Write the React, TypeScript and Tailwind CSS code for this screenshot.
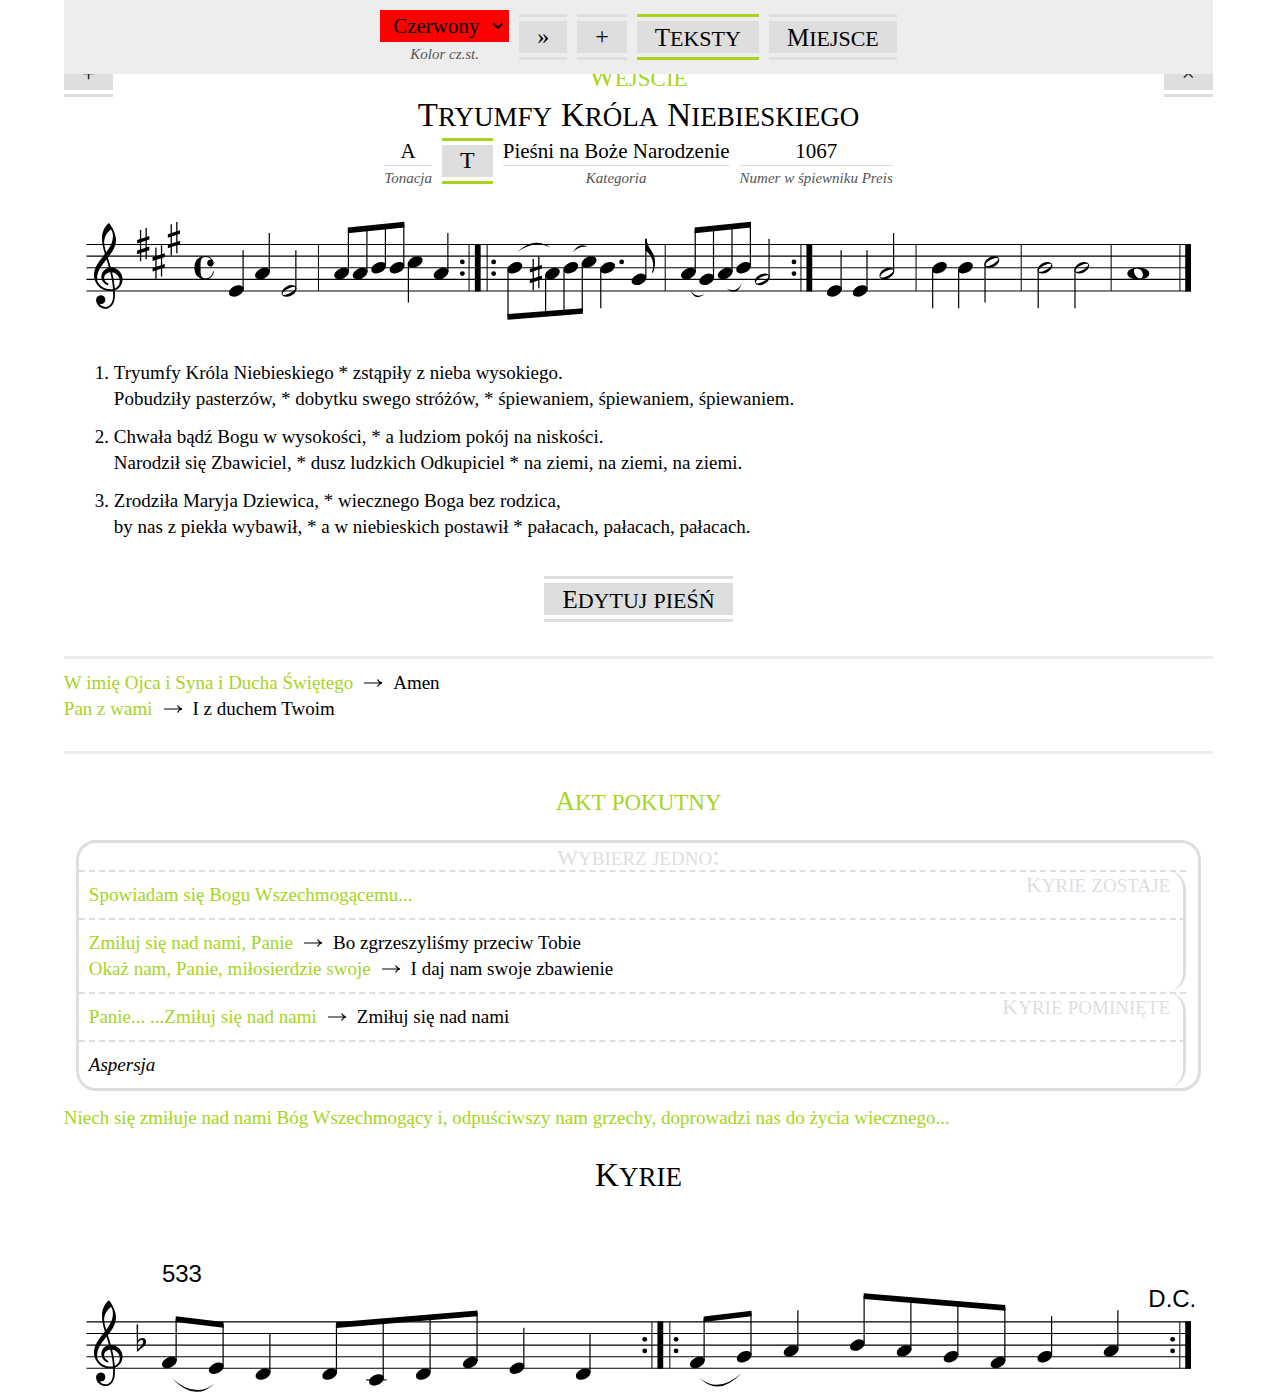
import React from "react";

type NoteKind = "quarter" | "half" | "whole";
type Note = { x: number; step: number; kind?: NoteKind; stem?: "up" | "down"; tip?: number };
type Beam = { x1: number; y1: number; x2: number; y2: number };
type Slur = { from: [number, number]; mid: [number, number]; to: [number, number] };

const GAP = 11.6;
const HEIGHT = GAP * 4;
const stepY = (step: number) => HEIGHT - (step * GAP) / 2;

const CLEF =
  "M9.69 -37.41c.09 -.09 .24 -.06 .36 0c.12 .09 .57 .6 .96 1.11c1.77 2.34 3.21 5.85 3.57 8.73c.21 1.56 .03 3.27 -.45 4.86c-.69 2.31 -1.92 4.47 -4.23 7.44c-.3 .39 -.57 .72 -.6 .75c-.03 .06 0 .15 .18 .78c.54 1.68 1.38 4.44 1.68 5.49l.09 .42l.39 0c1.47 .09 2.76 .51 3.96 1.29c1.83 1.23 3.06 3.21 3.39 5.52c.09 .45 .12 1.29 .06 1.74c-.09 1.02 -.33 1.83 -.75 2.73c-.84 1.71 -2.28 3.06 -4.02 3.72l-.33 .12l.03 1.26c0 1.74 -.06 3.63 -.21 4.62c-.45 3.06 -2.19 5.49 -4.47 6.21c-.57 .18 -.9 .21 -1.59 .21c-.69 0 -1.02 -.03 -1.65 -.21c-1.14 -.27 -2.13 -.84 -2.94 -1.65c-.99 -.99 -1.56 -2.16 -1.71 -3.54c-.09 -.81 .06 -1.53 .45 -2.13c.63 -.99 1.83 -1.56 3 -1.53c1.5 .09 2.64 1.32 2.73 2.94c.06 1.47 -.93 2.7 -2.37 2.97c-.45 .06 -.84 .03 -1.29 -.09l-.21 -.09l.09 .12c.39 .54 .78 .93 1.32 1.26c1.35 .87 3.06 1.02 4.35 .36c1.44 -.72 2.52 -2.28 2.97 -4.35c.15 -.66 .24 -1.5 .3 -3.03c.03 -.84 .03 -2.94 0 -3c-.03 0 -.18 0 -.36 .03c-.66 .12 -.99 .12 -1.83 .12c-1.05 0 -1.71 -.06 -2.61 -.3c-4.02 -.99 -7.11 -4.35 -7.8 -8.46c-.12 -.66 -.12 -.99 -.12 -1.83c0 -.84 0 -1.14 .15 -1.92c.36 -2.28 1.41 -4.62 3.3 -7.29l2.79 -3.6c.54 -.66 .96 -1.2 .96 -1.23c0 -.03 -.09 -.33 -.18 -.69c-.96 -3.21 -1.41 -5.28 -1.59 -7.68c-.12 -1.38 -.15 -3.09 -.06 -3.96c.33 -2.67 1.38 -5.07 3.12 -7.08c.36 -.42 .99 -1.05 1.17 -1.14zm2.01 4.71c-.15 -.3 -.3 -.54 -.3 -.54c-.03 0 -.18 .09 -.3 .21c-2.4 1.74 -3.87 4.2 -4.26 7.11c-.06 .54 -.06 1.41 -.03 1.89c.09 1.29 .48 3.12 1.08 5.22c.15 .42 .24 .78 .24 .81c0 .03 .84 -1.11 1.23 -1.68c1.89 -2.73 2.88 -5.07 3.15 -7.53c.09 -.57 .12 -1.74 .06 -2.37c-.09 -1.23 -.27 -1.92 -.87 -3.12zm-2.94 20.7c-.21 -.72 -.39 -1.32 -.42 -1.32c0 0 -1.2 1.47 -1.86 2.37c-2.79 3.63 -4.02 6.3 -4.35 9.3c-.03 .21 -.03 .69 -.03 1.08c0 .69 0 .75 .06 1.11c.12 .54 .27 .99 .51 1.47c.69 1.38 1.83 2.55 3.42 3.42c.96 .54 2.07 .9 3.21 1.08c.78 .12 2.04 .12 2.94 -.03c.51 -.06 .45 -.03 .42 -.3c-.24 -3.33 -.72 -6.33 -1.62 -10.08c-.09 -.39 -.18 -.75 -.18 -.78c-.03 -.03 -.42 0 -.81 .09c-.9 .18 -1.65 .57 -2.22 1.14c-.72 .72 -1.08 1.65 -1.05 2.64c.06 .96 .48 1.83 1.23 2.58c.36 .36 .72 .63 1.17 .9c.33 .18 .36 .21 .42 .33c.18 .42 -.18 .9 -.6 .87c-.18 -.03 -.84 -.36 -1.26 -.63c-.78 -.51 -1.38 -1.11 -1.86 -1.83c-1.77 -2.7 -.99 -6.42 1.71 -8.19c.3 -.21 .81 -.48 1.17 -.63c.3 -.09 1.02 -.3 1.14 -.3c.06 0 .09 0 .09 -.03c.03 -.03 -.51 -1.92 -1.23 -4.26zm3.78 7.41c-.18 -.03 -.36 -.06 -.39 -.06c-.03 0 0 .21 .18 1.02c.75 3.18 1.26 6.3 1.5 9.09c.06 .72 0 .69 .51 .42c.78 -.36 1.44 -.96 1.98 -1.77c1.08 -1.62 1.2 -3.69 .3 -5.55c-.81 -1.62 -2.31 -2.79 -4.08 -3.15z";
const COMMON_TIME =
  "M6.66 -7.83c.72 -.06 1.41 -.03 1.98 .09c1.2 .27 2.34 .96 3.09 1.92c.63 .81 1.08 1.86 1.14 2.73c.06 1.02 -.51 1.92 -1.44 2.22c-.24 .09 -.3 .09 -.63 .09c-.33 0 -.42 0 -.63 -.06c-.66 -.24 -1.14 -.63 -1.41 -1.2c-.15 -.3 -.21 -.51 -.24 -.9c-.06 -1.08 .57 -2.04 1.56 -2.37c.18 -.06 .27 -.06 .63 -.06l.45 0c.06 .03 .09 .03 .09 0c0 0 -.09 -.12 -.24 -.27c-1.02 -1.11 -2.55 -1.68 -4.08 -1.5c-1.29 .15 -2.04 .69 -2.4 1.74c-.36 .93 -.42 1.89 -.42 5.37c0 2.97 .06 3.96 .24 4.77c.24 1.08 .63 1.68 1.41 2.07c.81 .39 2.16 .45 3.18 .09c1.29 -.45 2.37 -1.53 3.03 -2.97c.15 -.33 .33 -.87 .39 -1.17c.09 -.24 .15 -.36 .3 -.39c.21 -.03 .42 .15 .39 .36c-.06 .39 -.42 1.38 -.69 1.89c-.96 1.8 -2.49 2.94 -4.23 3.18c-.99 .12 -2.58 -.06 -3.63 -.45c-.96 -.36 -1.71 -.84 -2.4 -1.5c-1.11 -1.11 -1.8 -2.61 -2.04 -4.56c-.06 -.6 -.06 -2.01 0 -2.61c.24 -1.95 .9 -3.45 2.01 -4.56c.69 -.66 1.44 -1.11 2.37 -1.47c.63 -.24 1.47 -.42 2.22 -.48z";

function Sharp({ x, step }: { x: number; step: number }) {
  return (
    <g transform={`translate(${x} ${stepY(step)})`}>
      <path d="M-2.7 -14.5V16.8M2.9 -16.7V14.6" stroke="#000" strokeWidth="1.3" />
      <path d="M-6.1 -1L6.1 -5V-8.6L-6.1 -4.6ZM-6.1 9.600L6.1 5.600V2L-6.1 6Z" />
    </g>
  );
}

function NoteShape({ x, step, kind = "quarter", stem, tip }: Note) {
  const y = stepY(step);
  const up = stem === "up";
  const stemX = up ? x + 6.8 : x - 6.8;
  return (
    <g>
      {kind === "quarter" && <ellipse rx="7.9" ry="5.1" transform={`translate(${x} ${y}) rotate(-26)`} />}
      {kind === "half" && (
        <path
          fillRule="evenodd"
          transform={`translate(${x} ${y}) rotate(-28)`}
          d="M-8 0A8 5.1 0 1 1 8 0A8 5.1 0 1 1 -8 0ZM-7.1 .5A7.1 2.4 0 1 0 7.1 -.5A7.1 2.4 0 1 0 -7.1 .5Z"
        />
      )}
      {kind === "whole" && (
        <path
          fillRule="evenodd"
          transform={`translate(${x} ${y})`}
          d="M-11 0C-11 -4 -6 -5.8 0 -5.8S11 -4 11 0S6 5.8 0 5.8S-11 4 -11 0ZM-4.4 -2.4C-4 1.8 -.5 5.4 2.5 4.8C5.4 4.2 5 -.2 3.2 -2.8C1.4 -5.4 -4.8 -6.4 -4.4 -2.4Z"
        />
      )}
      {stem && tip !== undefined && (
        <path d={`M${stemX} ${up ? y - 1.5 : y + 1.5}V${tip}`} stroke="#000" strokeWidth="1.2" />
      )}
    </g>
  );
}

function BeamShape({ x1, y1, x2, y2 }: Beam) {
  return <path d={`M${x1} ${y1}L${x2} ${y2}V${y2 + 5.7}L${x1} ${y1 + 5.7}Z`} />;
}

function SlurShape({ from, mid, to }: Slur) {
  const cx = 2 * mid[0] - (from[0] + to[0]) / 2;
  const cy = 2 * mid[1] - (from[1] + to[1]) / 2;
  const inner = cy + (cy > from[1] ? -3.6 : 3.6);
  return <path d={`M${from[0]} ${from[1]}Q${cx} ${cy} ${to[0]} ${to[1]}Q${cx} ${inner} ${from[0]} ${from[1]}Z`} />;
}

function RepeatDots({ x }: { x: number }) {
  return (
    <g>
      <circle cx={x} cy={GAP * 1.5} r="2.4" />
      <circle cx={x} cy={GAP * 2.5} r="2.4" />
    </g>
  );
}

type StaffProps = {
  label: string;
  top: number;
  height: number;
  thin: number[];
  thick: number[];
  dots: number[];
  notes: Note[];
  beams: Beam[];
  slurs: Slur[];
  children?: React.ReactNode;
};

function Staff({ label, top, height, thin, thick, dots, notes, beams, slurs, children }: StaffProps) {
  return (
    <svg role="img" aria-label={label} viewBox={`64 ${-top} 1150 ${height}`} className="block w-full">
      {[0, 1, 2, 3, 4].map((n) => (
        <path key={n} d={`M86.5 ${n * GAP}H1191.7`} stroke="#000" strokeWidth="1.1" />
      ))}
      <path d={CLEF} transform={`translate(94 ${GAP * 3}) scale(1.5)`} />
      {thin.map((x) => (
        <path key={x} d={`M${x} 0V${HEIGHT}`} stroke="#000" strokeWidth="1" />
      ))}
      {thick.map((x) => (
        <path key={x} d={`M${x} -.5V${HEIGHT + 0.5}`} stroke="#000" strokeWidth="5.8" />
      ))}
      {dots.map((x) => (
        <RepeatDots key={x} x={x} />
      ))}
      {notes.map((n) => (
        <NoteShape key={n.x} {...n} />
      ))}
      {beams.map((b) => (
        <BeamShape key={b.x1} {...b} />
      ))}
      {slurs.map((s) => (
        <SlurShape key={s.from[0]} {...s} />
      ))}
      {children}
    </svg>
  );
}

const songNotes: Note[] = [
  { x: 236.4, step: 0, stem: "up", tip: 5.8 },
  { x: 262.6, step: 3, stem: "up", tip: -11.6 },
  { x: 289.2, step: 0, kind: "half", stem: "up", tip: 5.8 },
  { x: 341.8, step: 3, stem: "up", tip: -14 },
  { x: 360.3, step: 3, stem: "up", tip: -16 },
  { x: 378.8, step: 4, stem: "up", tip: -18 },
  { x: 397.2, step: 4, stem: "up", tip: -20 },
  { x: 415.4, step: 5, stem: "down", tip: 58 },
  { x: 441.3, step: 3, stem: "up", tip: -11.6 },
  { x: 515.1, step: 4, stem: "down", tip: 72 },
  { x: 552.7, step: 3, stem: "down", tip: 70 },
  { x: 571.1, step: 4, stem: "down", tip: 68 },
  { x: 589.4, step: 5, stem: "down", tip: 67 },
  { x: 607.9, step: 4, stem: "down", tip: 63.8 },
  { x: 639.4, step: 2, stem: "up", tip: -5.8 },
  { x: 688.8, step: 3, stem: "up", tip: -14 },
  { x: 707.1, step: 2, stem: "up", tip: -16 },
  { x: 725.6, step: 3, stem: "up", tip: -18 },
  { x: 744, step: 4, stem: "up", tip: -20 },
  { x: 762.7, step: 2, kind: "half", stem: "up", tip: -5.8 },
  { x: 834.8, step: 0, stem: "up", tip: 5.8 },
  { x: 860.7, step: 0, stem: "up", tip: 5.8 },
  { x: 887.3, step: 3, kind: "half", stem: "up", tip: -11.6 },
  { x: 940, step: 4, stem: "down", tip: 63.8 },
  { x: 966, step: 4, stem: "down", tip: 63.8 },
  { x: 992.4, step: 5, kind: "half", stem: "down", tip: 58 },
  { x: 1045.6, step: 4, kind: "half", stem: "down", tip: 63.8 },
  { x: 1082.4, step: 4, kind: "half", stem: "down", tip: 63.8 },
  { x: 1139, step: 3, kind: "whole" },
];

const kyrieNotes: Note[] = [
  { x: 169.4, step: 1, stem: "up", tip: -3 },
  { x: 216.4, step: 0, stem: "up", tip: 2 },
  { x: 263.2, step: -1, stem: "up", tip: 11.6 },
  { x: 329.8, step: -1, stem: "up", tip: 2 },
  { x: 376.6, step: -2, stem: "up", tip: -2 },
  { x: 423.5, step: -1, stem: "up", tip: -6 },
  { x: 470.5, step: 1, stem: "up", tip: -9 },
  { x: 517.3, step: 0, stem: "up", tip: 5.8 },
  { x: 583.5, step: -1, stem: "up", tip: 11.6 },
  { x: 697.7, step: 1, stem: "up", tip: -3 },
  { x: 744.6, step: 2, stem: "up", tip: -9 },
  { x: 791.5, step: 3, stem: "up", tip: -11.6 },
  { x: 857.8, step: 4, stem: "up", tip: -26 },
  { x: 904.6, step: 3, stem: "up", tip: -22 },
  { x: 951.6, step: 2, stem: "up", tip: -18 },
  { x: 998.6, step: 1, stem: "up", tip: -15 },
  { x: 1045.4, step: 2, stem: "up", tip: -5.8 },
  { x: 1111.7, step: 3, stem: "up", tip: -11.6 },
];

/* Small capitals are drawn at 70% of the font size, so the leading capital gets a smaller size to balance them. */
const capSizes = {
  title: { word: "text-[38px]", capital: "first-letter:text-[33px]" },
  heading: { word: "text-[33px]", capital: "first-letter:text-[27px]" },
  button: { word: "text-[31px]", capital: "first-letter:text-[25px]" },
  note: { word: "text-[27px]", capital: "first-letter:text-[22px]" },
};

function SmallCaps({ text, size }: { text: string; size: keyof typeof capSizes }) {
  const { word, capital } = capSizes[size];
  return (
    <>
      {text.split(" ").map((part, i) => (
        <React.Fragment key={part}>
          {i > 0 && " "}
          <span
            className={
              "inline-block [font-variant:small-caps] " + word + (part[0] !== part[0].toLowerCase() ? " " + capital : "")
            }
          >
            {part}
          </span>
        </React.Fragment>
      ))}
    </>
  );
}

function Plate({ text, active = false, label }: { text: string; active?: boolean; label?: string }) {
  return (
    <button
      type="button"
      aria-label={label}
      className={
        "flex flex-col items-stretch gap-1 border-y-3 py-1 " + (active ? "border-[#a6d41f]" : "border-[#dedede]")
      }
    >
      <span className="block h-8 bg-[#dedede] px-[18px] text-2xl leading-[30px]">
        {text.length > 1 ? <SmallCaps text={text} size="button" /> : text}
      </span>
    </button>
  );
}

function Fact({ value, label }: { value: string; label: string }) {
  return (
    <div className="flex flex-col text-center">
      <dt className="order-last text-[15px] leading-6 text-[#555] italic">{label}</dt>
      <dd className="border-b border-[#dedede] text-[21px] leading-[27px]">{value}</dd>
    </div>
  );
}

function Call({ say, reply }: { say: string; reply?: string }) {
  return (
    <p>
      <span className="text-[#a6d41f]">{say}</span>
      {reply && (
        <>
          <svg viewBox="0 0 20 10" className="mx-[10px] mb-px inline-block h-[10px] w-5 align-baseline" aria-label="→">
            <path d="M1 5H18.5M14.5 1.5Q16 4.5 19 5Q16 5.500 14.5 8.500" fill="none" stroke="#000" strokeWidth="1.200" />
          </svg>
          {reply}
        </>
      )}
    </p>
  );
}

const verses = [
  ["Tryumfy Króla Niebieskiego * zstąpiły z nieba wysokiego.", "Pobudziły pasterzów, * dobytku swego stróżów, * śpiewaniem, śpiewaniem, śpiewaniem."],
  ["Chwała bądź Bogu w wysokości, * a ludziom pokój na niskości.", "Narodził się Zbawiciel, * dusz ludzkich Odkupiciel * na ziemi, na ziemi, na ziemi."],
  ["Zrodziła Maryja Dziewica, * wiecznego Boga bez rodzica,", "by nas z piekła wybawił, * a w niebieskich postawił * pałacach, pałacach, pałacach."],
];

function OptionGroup({ label, children }: { label: string; children: React.ReactNode }) {
  return (
    <div className="relative mr-3">
      {children}
      <div className="pointer-events-none absolute inset-y-0 right-0 w-5 rounded-r-[20px] border-r-3 border-[#dedede]" />
      <p className="absolute top-0 right-4 text-[21px] leading-[26px] text-[#dedede]">
        <SmallCaps text={label} size="note" />
      </p>
    </div>
  );
}

function Option({ children }: { children: React.ReactNode }) {
  return <div className="border-t-2 border-dashed border-[#dedede] p-[10px]">{children}</div>;
}

export default function App() {
  return (
    <div className="min-h-screen bg-white font-['Liberation_Serif',serif] text-[19px] leading-[26px] text-black">
      <header className="fixed inset-x-[5%] top-0 z-10 flex h-[74px] justify-center gap-[10px] bg-[#ededed] pt-[10px]">
        <div className="flex flex-col items-center">
          <div className="relative">
            <select
              id="color"
              defaultValue="red"
              className="h-8 w-[129px] appearance-none bg-[#ff0000] pl-[13px] text-[21px] leading-8"
            >
              <option value="red">Czerwony</option>
            </select>
            <svg viewBox="0 0 12 8" className="pointer-events-none absolute top-3 right-[5px] h-2 w-3">
              <path d="M1.500 1.500L6 6L10.500 1.500" fill="none" stroke="#000" strokeWidth="1.800" />
            </svg>
          </div>
          <label htmlFor="color" className="text-[15px] leading-6 text-[#555] italic">
            Kolor cz.st.
          </label>
        </div>
        <div className="flex items-start gap-[10px] pt-1">
          <Plate text="»" />
          <Plate text="+" />
          <Plate text="Teksty" active />
          <Plate text="Miejsce" />
        </div>
      </header>

      <main className="mx-auto w-[90%] pt-[51px]">
        <section>
          <div className="flex h-[46px] items-start justify-between">
            <Plate text="+" label="Dodaj" />
            <h2 className="pt-2 text-2xl leading-8 text-[#a6d41f]">
              <SmallCaps text="Wejście" size="heading" />
            </h2>
            <Plate text="×" label="Usuń" />
          </div>
          <h1 className="mb-[9px] h-8 text-center text-4xl leading-8">
            <SmallCaps text="Tryumfy Króla Niebieskiego" size="title" />
          </h1>
          <dl className="flex items-start justify-center gap-[10px]">
            <Fact value="A" label="Tonacja" />
            <Plate text="T" active />
            <Fact value="Pieśni na Boże Narodzenie" label="Kategoria" />
            <Fact value="1067" label="Numer w śpiewniku Preis" />
          </dl>

          <Staff
            label="Nuty: Tryumfy Króla Niebieskiego"
            top={54.6}
            height={150}
            thin={[318.6, 469.3, 487.4, 665.6, 801.4, 916.6, 1021.8, 1111.8, 1180.6]}
            thick={[478, 809.8, 1188.8]}
            dots={[462.6, 493.9, 794.4]}
            notes={songNotes}
            beams={[
              { x1: 348, y1: -17, x2: 404.6, y2: -22.8 },
              { x1: 507.700, y1: 69.500, x2: 583.2, y2: 63.6 },
              { x1: 695, y1: -17, x2: 751.4, y2: -22.8 },
            ]}
            slurs={[
              { from: [517, 8], mid: [534, -1.5], to: [551, 3] },
              { from: [573, 8], mid: [580, 1.2], to: [588, 2.5] },
              { from: [690.3, 44.5], mid: [696.5, 52.5], to: [705.3, 49.5] },
              { from: [727, 44], mid: [736, 47], to: [742.5, 38.5] },
            ]}
          >
            <Sharp x={143.3} step={8} />
            <Sharp x={158.7} step={5} />
            <Sharp x={174} step={9} />
            <Sharp x={536.2} step={3} />
            <path d={COMMON_TIME} transform={`translate(194.500 ${GAP * 2}) scale(1.5)`} />
            <circle cx="622" cy={GAP * 1.5} r="2.400" />
            <path d="M645.600 -5.800H646.800C647.500 0 650 3.500 652.500 7.500C656.500 14 656 21 653.400 28.300L652.300 28C654.600 21 653.600 14.500 649.500 9.500C648 7.500 646.800 6.500 645.600 6Z" />
          </Staff>

          <ol className="mt-5 flex list-decimal flex-col gap-3 pl-[50px]">
            {verses.map(([first, second]) => (
              <li key={first}>
                {first}
                <br />
                {second}
              </li>
            ))}
          </ol>

          <div className="mt-9 flex justify-center">
            <Plate text="Edytuj pieśń" />
          </div>
        </section>

        <section className="mt-[34px] border-y-3 border-[#ededed] pt-[11px] pb-[29px]">
          <Call say="W imię Ojca i Syna i Ducha Świętego" reply="Amen" />
          <Call say="Pan z wami" reply="I z duchem Twoim" />
        </section>

        <section>
          <h2 className="mt-[29px] h-8 text-center text-2xl leading-8 text-[#a6d41f]">
            <SmallCaps text="Akt pokutny" size="heading" />
          </h2>
          <div className="mx-3 mt-[25px] rounded-[20px] border-3 border-[#dedede]">
            <h3 className="h-[27px] text-center text-[21px] leading-[26px] text-[#dedede]">
              <SmallCaps text="Wybierz jedno:" size="note" />
            </h3>
            <OptionGroup label="Kyrie zostaje">
              <Option>
                <Call say="Spowiadam się Bogu Wszechmogącemu..." />
              </Option>
              <Option>
                <Call say="Zmiłuj się nad nami, Panie" reply="Bo zgrzeszyliśmy przeciw Tobie" />
                <Call say="Okaż nam, Panie, miłosierdzie swoje" reply="I daj nam swoje zbawienie" />
              </Option>
            </OptionGroup>
            <OptionGroup label="Kyrie pominięte">
              <Option>
                <Call say="Panie... ...Zmiłuj się nad nami" reply="Zmiłuj się nad nami" />
              </Option>
              <Option>
                <p className="italic">Aspersja</p>
              </Option>
            </OptionGroup>
          </div>
          <p className="mt-[14px] text-[#a6d41f]">
            Niech się zmiłuje nad nami Bóg Wszechmogący i, odpuściwszy nam grzechy, doprowadzi nas do życia wiecznego...
          </p>
        </section>

        <section className="mt-6">
          <h2 className="h-9 text-center text-4xl leading-9">
            <SmallCaps text="Kyrie" size="title" />
          </h2>
          <Staff
            label="Nuty: Kyrie"
            top={131}
            height={204}
            thin={[652.3, 670.2, 1180.5]}
            thick={[660.7, 1188.8]}
            dots={[645.1, 676.5, 1173.3]}
            notes={kyrieNotes}
            beams={[
              { x1: 175.8, y1: -5.6, x2: 223.6, y2: 0.2 },
              { x1: 336.2, y1: 0.4, x2: 477.8, y2: -11.4 },
              { x1: 704, y1: -5.5, x2: 752, y2: -11.3 },
              { x1: 864.2, y1: -28.6, x2: 1005.8, y2: -17 },
            ]}
            slurs={[
              { from: [171.7, 56], mid: [194, 69.8], to: [214.3, 61.8] },
              { from: [700, 55.8], mid: [720, 64.500], to: [742.6, 50.5] },
            ]}
          >
            <path
              fillRule="evenodd"
              d="M136.600 2.500H138.200L137.900 18.500C141 15 146.200 15.500 146.200 19.800C146.200 24 141 26.500 137 30ZM137.900 21V27C141.500 24 143 22.500 143 19.800C143 17 139.500 17.500 137.900 21Z"
            />
            <path d="M366.300 58H386.700" stroke="#000" strokeWidth="1.100" />
            <g className="font-['Liberation_Sans',sans-serif] text-2xl">
              <text x="162" y="-40">
                533
              </text>
              <text x="1149" y="-15">
                D.C.
              </text>
            </g>
          </Staff>
        </section>
      </main>
    </div>
  );
}
